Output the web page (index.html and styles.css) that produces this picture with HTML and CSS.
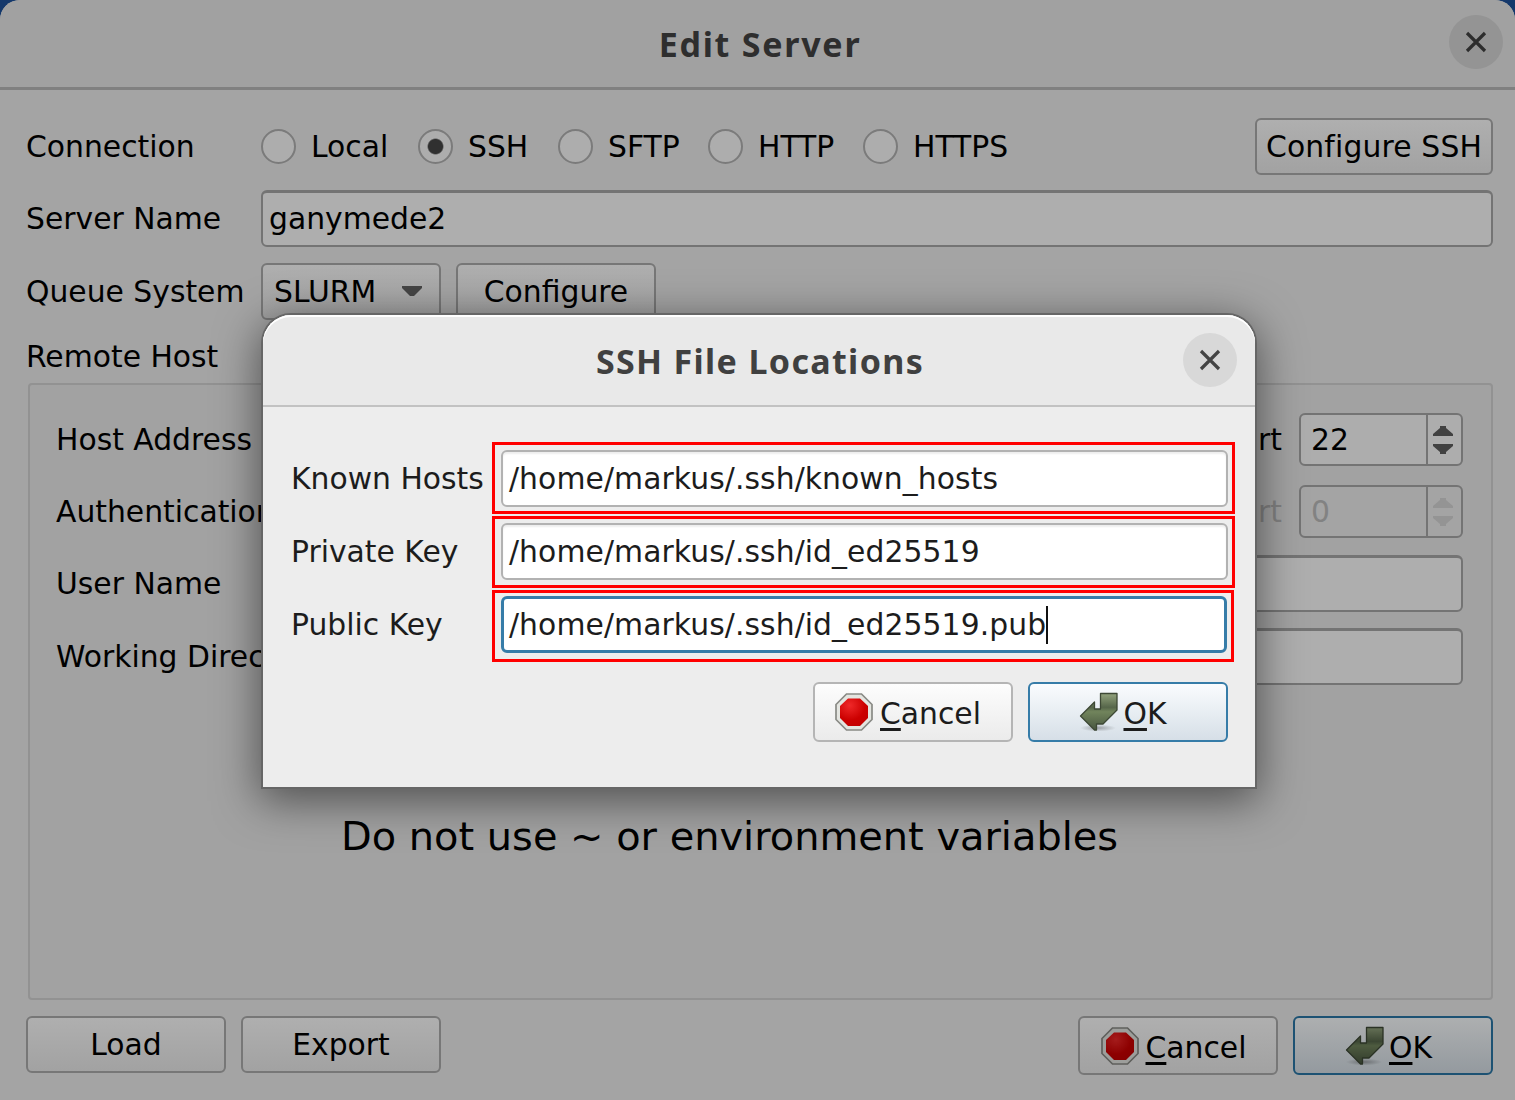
FILE: index.html
```html
<!DOCTYPE html>
<html lang="en">
<head>
<meta charset="utf-8">
<title>Edit Server</title>
<link rel="stylesheet" href="styles.css">
</head>
<body>
<svg class="defs" width="0" height="0">
  <defs>
    <radialGradient id="red" cx=".35" cy=".25" r=".9"><stop offset="0" stop-color="#ef2929"/><stop offset=".6" stop-color="#cc0000"/><stop offset="1" stop-color="#c00000"/></radialGradient>
    <linearGradient id="green" x1="0" y1="0" x2="0" y2="1"><stop offset="0" stop-color="#93a37d"/><stop offset=".38" stop-color="#56664a"/><stop offset=".5" stop-color="#71845c"/><stop offset="1" stop-color="#485640"/></linearGradient>
    <radialGradient id="shade"><stop offset="0" stop-color="#000" stop-opacity=".3"/><stop offset="1" stop-color="#000" stop-opacity="0"/></radialGradient>
    <symbol id="stop" viewBox="0 0 38 38">
      <path d="M11.500 1h15L37 11.500v15L26.500 37h-15L1 26.500v-15z" fill="#e4e5e0" stroke="#898a85" stroke-width="1.700"/>
      <path d="M13 5.500h12L33 13v12l-8 8H13l-8-8V13z" fill="url(#red)"/>
    </symbol>
    <symbol id="enter" viewBox="0 0 40 40">
      <ellipse cx="19" cy="36" rx="18" ry="3.500" fill="url(#shade)"/>
      <path d="M21.500 1.500H38V18L24 32h-6.500v6h-2L1.500 24 15.500 10v7h6z" fill="url(#green)" stroke="#3d4835" stroke-width="1.300" stroke-linejoin="round"/>
    </symbol>
    <symbol id="close" viewBox="0 0 22 22"><path d="M2 2l18 18M20 2L2 20" fill="none" stroke="currentColor" stroke-width="3.200"/></symbol>
  </defs>
</svg>
<main class="window">
  <header class="titlebar"><h1 class="title">Edit Server</h1><button class="close"><svg><use href="#close"/></svg></button></header>
  <div class="content">
    <div class="row connection">
      <span class="label">Connection</span>
      <div class="radios">
        <span class="radio local"><i></i>Local</span>
        <span class="radio ssh on"><i></i>SSH</span>
        <span class="radio sftp"><i></i>SFTP</span>
        <span class="radio http"><i></i>HTTP</span>
        <span class="radio https"><i></i>HTTPS</span>
      </div>
      <button class="btn config-ssh">Configure SSH</button>
    </div>
    <div class="row server"><span class="label">Server Name</span><div class="field grow">ganymede2</div></div>
    <div class="row queue"><span class="label">Queue System</span><div class="btn combo">SLURM<svg width="20" height="11"><path d="M0 0h20v2l-8 8H8L0 2z" fill="#454545"/></svg></div><button class="btn">Configure</button></div>
    <div class="section-label">Remote Host</div>
    <section class="group">
      <div class="row grow-row first"><span>Host Address</span><span class="port">Port</span><div class="spin"><span>22</span><div class="arrows"><svg width="20" height="30"><path d="M0 11V9l7-6V1h6v2l7 6v2zM0 19v2l7 6v2h6v-2l7-6v-2z" fill="currentColor"/></svg></div></div></div>
      <div class="row grow-row second"><span>Authentication</span><span class="port dim">Port</span><div class="spin dim"><span>0</span><div class="arrows"><svg width="20" height="30"><path d="M0 11V9l7-6V1h6v2l7 6v2zM0 19v2l7 6v2h6v-2l7-6v-2z" fill="currentColor"/></svg></div></div></div>
      <div class="row user"><span class="inner-label">User Name</span><div class="field grow"></div></div>
      <div class="row work"><span class="inner-label">Working Directory</span><div class="field grow"></div></div>
      <p class="note">Do not use ~ or environment variables</p>
    </section>
    <footer class="footer">
      <button class="btn">Load</button><button class="btn">Export</button><span class="spacer"></span>
      <button class="btn tall icon-btn"><svg class="stop"><use href="#stop"/></svg><span><u>C</u>ancel</span></button>
      <button class="btn tall icon-btn primary"><svg class="enter"><use href="#enter"/></svg><span><u>O</u>K</span></button>
    </footer>
  </div>
</main>
<section class="dialog">
  <header class="titlebar"><h2 class="title">SSH File Locations</h2><button class="close"><svg><use href="#close"/></svg></button></header>
  <div class="form">
    <div class="file-row known"><span>Known Hosts</span><div class="mark"><div class="field">/home/markus/.ssh/known_hosts</div></div></div>
    <div class="file-row private"><span>Private Key</span><div class="mark"><div class="field">/home/markus/.ssh/id_ed25519</div></div></div>
    <div class="file-row public"><span>Public Key</span><div class="mark"><div class="field focus">/home/markus/.ssh/id_ed25519.pub<i class="caret"></i></div></div></div>
    <div class="actions">
      <button class="btn tall icon-btn"><svg class="stop"><use href="#stop"/></svg><span><u>C</u>ancel</span></button>
      <button class="btn tall icon-btn primary"><svg class="enter"><use href="#enter"/></svg><span><u>O</u>K</span></button>
    </div>
  </div>
</section>
</body>
</html>
```
FILE: styles.css
```css
* { box-sizing: border-box; }
body { margin: 0; width: 1515px; height: 1100px; overflow: hidden; background: #14386b; font: 29.8px/36px "DejaVu Sans", sans-serif; color: #000; }
.defs { position: absolute; }
button { font: inherit; color: inherit; padding: 0; margin: 0; }
.window { width: 1515px; height: 1100px; background: #a4a4a4; border-radius: 20px 20px 0 0; overflow: hidden; }
.titlebar { display: grid; grid-template-columns: 54px 1fr 54px; }
.window .titlebar { height: 90px; padding: 15px 12px 0; background: #a1a1a1; border-bottom: 3px solid #808080; }
.title { grid-column: 2; margin: 0; padding-left: 5px; text-align: center; font: bold 34px/59px "Noto Sans", sans-serif; letter-spacing: 1.75px; color: #2e2e2e; }
.close { grid-column: 3; width: 54px; height: 54px; border: 0; border-radius: 50%; background: #949494; color: #2d2d2d; display: flex; align-items: center; justify-content: center; }
.close svg { width: 22px; height: 22px; }
.content { padding: 28px 22px 0 26px; }
.row { display: flex; align-items: center; white-space: nowrap; }
.label { width: 235px; flex: none; }
.connection { height: 57px; }
.radios { display: flex; flex: 1; }
.radio { display: flex; align-items: center; gap: 15px; }
.radio i { width: 35px; height: 35px; border: 2px solid #7b7b7b; border-radius: 50%; background: #adadad; }
.radio.on i { background: radial-gradient(circle, #303030 7px, #adadad 8.5px); }
.local { width: 157px; } .ssh { width: 140px; } .sftp { width: 150px; } .http { width: 155px; }
.btn { height: 57px; width: 200px; flex: none; border: 2px solid #777; border-radius: 6px; background: linear-gradient(#afafaf, #a2a2a2); display: flex; align-items: center; justify-content: center; }
.config-ssh { width: 238px; letter-spacing: .15px; }
.field { height: 57px; border: 2px solid #747474; border-top-width: 3px; border-radius: 6px; background: #aeaeae; padding-left: 6px; display: flex; align-items: center; }
.grow { flex: 1; }
.server { margin-top: 15px; }
.queue { margin-top: 16px; }
.combo { width: 180px; margin-right: 15px; padding: 0 17px 0 11px; justify-content: space-between; }
.section-label { margin-top: 19px; height: 36px; }
.group { margin: 8px 0 0 2px; width: 1465px; height: 617px; padding: 28px 28px 0 26px; border: 2px solid #929292; border-radius: 4px; background: #a2a2a2; }
.grow-row { height: 53px; }
.port { margin-left: auto; margin-right: 17px; }
.spin { width: 164px; height: 53px; border: 2px solid #747474; border-radius: 6px; background: #adadad; display: flex; align-items: center; }
.spin > span { width: 125px; padding-left: 10px; }
.arrows { flex: 1; height: 100%; border-left: 2px solid #747474; display: flex; align-items: center; padding-left: 5px; color: #414141; }
.dim { color: #828282; }
.spin.dim { background: #a4a4a4; }
.dim .arrows { color: #949494; }
.second { margin-top: 19px; }
.user { margin-top: 17px; } .work { margin-top: 16px; }
.inner-label { width: 285px; }
.note { margin: 126px 0 0 285px; font-size: 39.9px; line-height: 50px; white-space: nowrap; }
.footer { display: flex; margin-top: 16px; gap: 15px; }
.spacer { flex: 1; }
.tall { height: 60px; }
.icon-btn { gap: 7px; padding-right: 10px; }
.icon-btn > span { padding-top: 4px; }
.primary { gap: 4px; }
.stop { width: 38px; height: 38px; } .enter { width: 40px; height: 40px; }
u { text-underline-offset: 4px; text-decoration-thickness: 3px; }
.window .icon-btn svg { filter: brightness(.69); }
.window .tall { height: 59px; padding-right: 9px; }
.primary { border-color: #1d5273; background: linear-gradient(#adafb0, #949a9f); }
.dialog { position: absolute; left: 263px; top: 315px; width: 992px; height: 472px; background: #ededed; border-radius: 28px 28px 0 0; box-shadow: 0 0 0 2px #666, 0 10px 44px 4px rgba(0,0,0,.5); color: #1c1c1c; }
.dialog .titlebar { height: 92px; padding: 18px 18px 0 19px; border-bottom: 2px solid #c2c2c2; border-radius: 28px 28px 0 0; background: #e9e9e9; box-shadow: inset 0 2px #fff; }
.dialog .title { padding-left: 1px; line-height: 57px; letter-spacing: 1.35px; color: #404040; }
.dialog .close { background: #d8d8d8; color: #444; }
.form { padding: 35px 20px 0 28px; }
.file-row { display: grid; grid-template-columns: 201px 743px; align-items: center; margin-bottom: 2px; white-space: nowrap; }
.file-row > span { padding-top: 2px; }
.mark { height: 72px; border: 3px solid #f00; padding: 5px 4px 0 6px; }
.private .mark { padding-top: 4px; }
.public .mark { width: 742px; padding-top: 3px; }
.file-row.public > span { padding: 0 0 2px; }
.file-row.private > span { padding: 0; }
.dialog .field { border: 2px solid #b2b2b2; background: #fff; box-shadow: inset 0 2px 2px #eee; letter-spacing: .08px; }
.dialog .focus { border: 3px solid #367ca8; box-shadow: none; padding-left: 5px; }
.caret { width: 2px; height: 38px; background: #111; }
.actions { display: flex; justify-content: flex-end; gap: 15px; margin: 20px 7px 0 0; }
.dialog .btn { border-color: #b5b5b5; background: linear-gradient(#fdfdfd, #ebebeb); }
.dialog .primary { border-color: #367ca8; background: linear-gradient(#fafcfe, #d6dfe7); }
```
